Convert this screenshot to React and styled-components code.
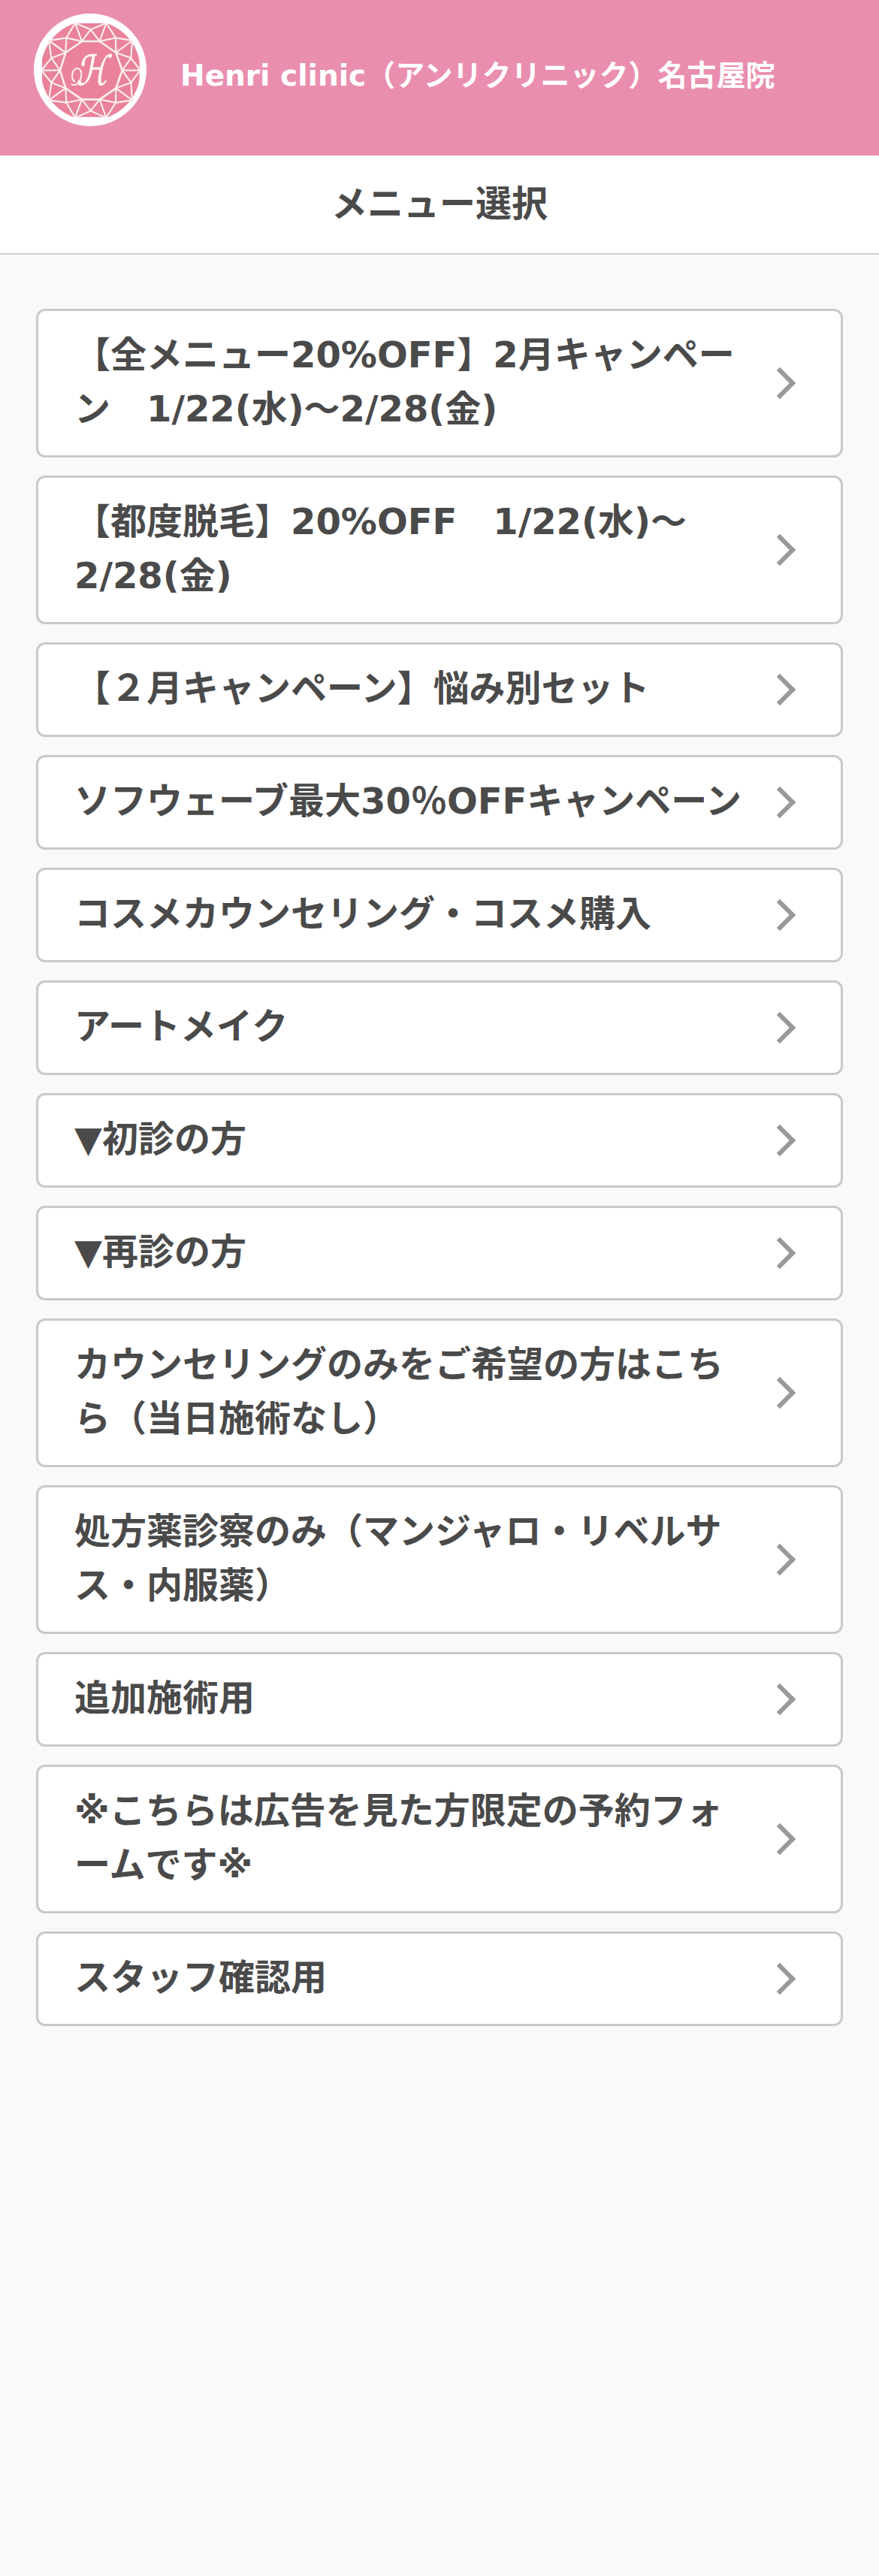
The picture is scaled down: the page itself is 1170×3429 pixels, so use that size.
import React from "react";
import styled, { createGlobalStyle } from "styled-components";

const GlobalStyle = createGlobalStyle`
  * {
    box-sizing: border-box;
  }
  body {
    margin: 0;
    background: #f9f9f9;
    color: #4a4a4a;
    font-family: "DejaVu Sans", "Noto Sans CJK JP", sans-serif;
    font-size: 48px;
    line-height: 1.5;
  }
`;

const Page = styled.div`
  min-height: 3429px;
  background: #f9f9f9;
`;

const Header = styled.header`
  height: 207px;
  padding: 18px 45px 0;
  display: flex;
  align-items: flex-start;
  background: #e98eaf;
`;

const Logo = styled.svg`
  width: 150px;
  height: 150px;
  flex: none;
`;

const ClinicName = styled.h1`
  margin: 54px 0 0 45px;
  color: #fff;
  font-size: 39px;
  font-weight: bold;
  line-height: 58px;
  white-space: nowrap;
`;

const PageTitle = styled.h2`
  margin: 0;
  height: 132px;
  padding-top: 28px;
  border-bottom: 2px solid #d0d0d0;
  background: #fff;
  font-size: 48px;
  font-weight: bold;
  text-align: center;
`;

const MenuList = styled.ul`
  margin: 0;
  padding: 72px 48px;
  display: flex;
  flex-direction: column;
  gap: 24px;
  list-style: none;
`;

const MenuItem = styled.li`
  padding: 0 66px 0 48px;
  display: flex;
  align-items: center;
  justify-content: space-between;
  border: 3px solid #c9c9c9;
  border-radius: 12px;
  background: #fff;
`;

const MenuLabel = styled.span`
  width: 903px;
  padding: 22px 0 26px;
  font-weight: bold;
`;

const Chevron = styled.span`
  width: 30px;
  height: 30px;
  border: solid #999;
  border-width: 6px 6px 0 0;
  transform: rotate(45deg);
`;

const menus = [
  "【全メニュー20%OFF】2月キャンペーン　1/22(水)〜2/28(金)",
  "【都度脱毛】20%OFF　1/22(水)〜2/28(金)",
  "【２月キャンペーン】悩み別セット",
  "ソフウェーブ最大30％OFFキャンペーン",
  "コスメカウンセリング・コスメ購入",
  "アートメイク",
  "▼初診の方",
  "▼再診の方",
  "カウンセリングのみをご希望の方はこちら（当日施術なし）",
  "処方薬診察のみ（マンジャロ・リベルサス・内服薬）",
  "追加施術用",
  "※こちらは広告を見た方限定の予約フォームです※",
  "スタッフ確認用",
];

// facet corners of the cut stone, from the table outwards
const inner = [
  [308, 165], [373, 210], [398, 281], [373, 352], [308, 397],
  [237, 397], [172, 352], [150, 281], [172, 210], [237, 165],
];
const middle = [
  [372, 151], [433, 232], [433, 330], [372, 410], [272, 443],
  [175, 410], [115, 330], [115, 232], [175, 151], [272, 118],
];
const outer = [
  [334, 92], [438, 162], [470, 281], [438, 400], [334, 470],
  [210, 470], [105, 400], [75, 281], [105, 162], [210, 92],
];

const facets = inner
  .map((point, i) => {
    const before = middle[(i + 9) % 10];
    const after = middle[i];
    return `M${before} L${point} L${after} L${outer[i]} Z M${point} L${outer[i]}`;
  })
  .join(" ");

function ClinicLogo() {
  return (
    <Logo viewBox="45 54 450 450" role="img" aria-label="Henri clinic">
      <defs>
        <clipPath id="stone">
          <rect x="78" y="93" width="389" height="374" />
        </clipPath>
      </defs>
      <circle cx="270" cy="279" r="225" fill="#fff" />
      <g clipPath="url(#stone)">
        <circle cx="272" cy="281" r="199" fill="#e9829a" />
        <path d={facets} fill="none" stroke="#fdeeed" strokeWidth="6.5" />
        <polygon
          points={inner.join(" ")}
          fill="#e9829a"
          stroke="#fdeeed"
          strokeWidth="8"
        />
      </g>
      <text
        transform="translate(278 340) skewX(-10) scale(0.78 1)"
        textAnchor="middle"
        fontFamily="DejaVu Sans"
        fontSize="165"
        fill="#fff4f0"
        stroke="#fff4f0"
        strokeWidth="3"
      >
        ℋ
      </text>
      {/* flourish on the left of the monogram */}
      <path
        d="M196 337 C214 345 232 330 235 300 C237 278 222 268 210 276 C195 286 194 318 208 326"
        fill="none"
        stroke="#fff4f0"
        strokeWidth="6"
        strokeLinecap="round"
      />
    </Logo>
  );
}

export default function App() {
  return (
    <Page>
      <GlobalStyle />
      <Header>
        <ClinicLogo />
        <ClinicName>Henri clinic（アンリクリニック）名古屋院</ClinicName>
      </Header>
      <PageTitle>メニュー選択</PageTitle>
      <MenuList>
        {menus.map((menu) => (
          <MenuItem key={menu}>
            <MenuLabel>{menu}</MenuLabel>
            <Chevron />
          </MenuItem>
        ))}
      </MenuList>
    </Page>
  );
}
